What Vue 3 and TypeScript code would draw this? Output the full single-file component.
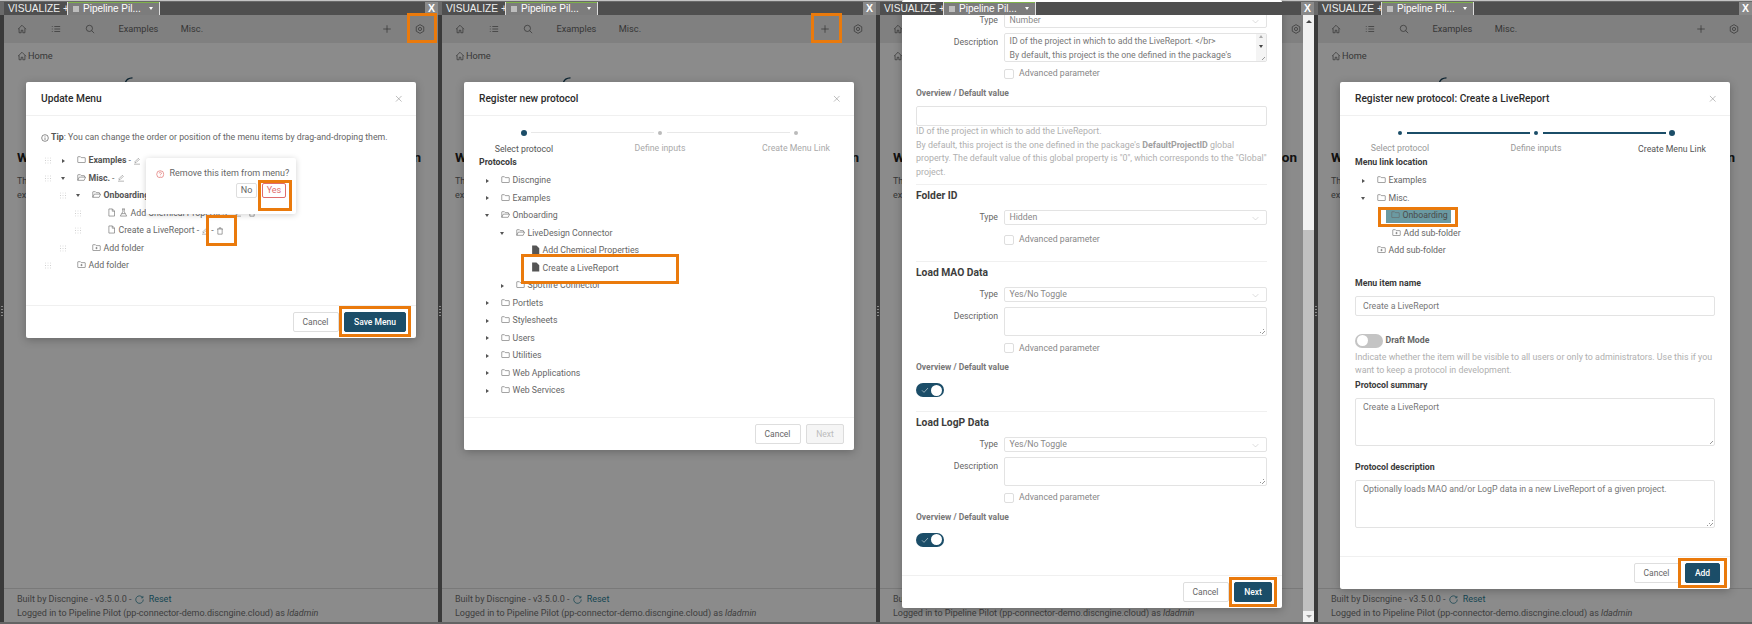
<script setup lang="ts">
interface Row {
  d: number
  arrow?: 'r' | 'd'
  icon: string
  label: string
  bold?: boolean
  flask?: boolean
  edit?: boolean
  del?: boolean
  on?: boolean
}
interface Mark { x: number; y: number; w: number; h: number }
interface Shot { id: string; marks: Mark[] }

const shots: Shot[] = [
  { id: 'menu', marks: [
    { x: 407, y: 13, w: 30, h: 30 }, { x: 258, y: 180, w: 34, h: 31 },
    { x: 206, y: 215, w: 31, h: 31 }, { x: 339, y: 306, w: 72, h: 31 } ] },
  { id: 'proto', marks: [
    { x: 373, y: 13, w: 31, h: 30 }, { x: 83, y: 254, w: 158, h: 30 } ] },
  { id: 'inputs', marks: [ { x: 353, y: 577, w: 48, h: 30 } ] },
  { id: 'link', marks: [
    { x: 64, y: 207, w: 80, h: 20 }, { x: 364, y: 558, w: 49, h: 30 } ] },
]

const menuRows: Row[] = [
  { d: 0, arrow: 'r', icon: 'folder', label: 'Examples', bold: true, edit: true },
  { d: 0, arrow: 'd', icon: 'open', label: 'Misc.', bold: true, edit: true },
  { d: 1, arrow: 'd', icon: 'open', label: 'Onboarding', bold: true, edit: true },
  { d: 2, icon: 'file', label: 'Add Chemical Properties', flask: true, edit: true, del: true },
  { d: 2, icon: 'file', label: 'Create a LiveReport', edit: true, del: true },
  { d: 1, icon: 'add', label: 'Add folder' },
  { d: 0, icon: 'add', label: 'Add folder' },
]
const protoRows: Row[] = [
  { d: 0, arrow: 'r', icon: 'folder', label: 'Discngine' },
  { d: 0, arrow: 'r', icon: 'folder', label: 'Examples' },
  { d: 0, arrow: 'd', icon: 'open', label: 'Onboarding' },
  { d: 1, arrow: 'd', icon: 'open', label: 'LiveDesign Connector' },
  { d: 2, icon: 'solid', label: 'Add Chemical Properties' },
  { d: 2, icon: 'solid', label: 'Create a LiveReport' },
  { d: 1, arrow: 'r', icon: 'folder', label: 'Spotfire Connector' },
  { d: 0, arrow: 'r', icon: 'folder', label: 'Portlets' },
  { d: 0, arrow: 'r', icon: 'folder', label: 'Stylesheets' },
  { d: 0, arrow: 'r', icon: 'folder', label: 'Users' },
  { d: 0, arrow: 'r', icon: 'folder', label: 'Utilities' },
  { d: 0, arrow: 'r', icon: 'folder', label: 'Web Applications' },
  { d: 0, arrow: 'r', icon: 'folder', label: 'Web Services' },
]
const linkRows: Row[] = [
  { d: 0, arrow: 'r', icon: 'folder', label: 'Examples' },
  { d: 0, arrow: 'd', icon: 'folder', label: 'Misc.' },
  { d: 1, icon: 'folder', label: 'Onboarding', on: true },
  { d: 1, icon: 'add', label: 'Add sub-folder' },
  { d: 0, icon: 'add', label: 'Add sub-folder' },
]
const steps = ['Select protocol', 'Define inputs', 'Create Menu Link']
const titles: Record<string, string> = {
  menu: 'Update Menu',
  proto: 'Register new protocol',
  link: 'Register new protocol: Create a LiveReport',
}
</script>

<template>
  <div class="board">
    <svg class="sprite" aria-hidden="true">
      <symbol id="i-home" viewBox="0 0 24 24"><path d="M2.5 12.5 12 3l9.5 9.5M5 10.5V21h5v-6h4v6h5V10.5"/></symbol>
      <symbol id="i-list" viewBox="0 0 24 24"><path d="M8 6h14M8 12h14M8 18h14M2 6h2M2 12h2M2 18h2"/></symbol>
      <symbol id="i-search" viewBox="0 0 24 24"><circle cx="10.5" cy="10.5" r="7.5"/><path d="m16 16 6 6"/></symbol>
      <symbol id="i-plus" viewBox="0 0 24 24"><path d="M12 3v18M3 12h18"/></symbol>
      <symbol id="i-gear" viewBox="0 0 24 24"><path d="M12 1.500 21 6.700v10.600L12 22.500 3 17.300V6.700Z"/><circle cx="12" cy="12" r="3.800"/></symbol>
      <symbol id="i-folder" viewBox="0 0 24 24"><path d="M2 5.500a1 1 0 0 1 1-1h6l2.500 2.500H21a1 1 0 0 1 1 1v11a1 1 0 0 1-1 1H3a1 1 0 0 1-1-1Z"/></symbol>
      <symbol id="i-open" viewBox="0 0 24 24"><path d="M2 19.500V5.500a1 1 0 0 1 1-1h6l2.500 2.500H19a1 1 0 0 1 1 1V11M2 19.500l4-8.500h17l-4 8.500Z"/></symbol>
      <symbol id="i-add" viewBox="0 0 24 24"><path d="M2 5.500a1 1 0 0 1 1-1h6l2.500 2.500H21a1 1 0 0 1 1 1v11a1 1 0 0 1-1 1H3a1 1 0 0 1-1-1ZM12 10.500v6M9 13.500h6"/></symbol>
      <symbol id="i-file" viewBox="0 0 24 24"><path d="M5 2.500h9.500L20 8v13.500H5ZM14 2.500V8.500h6"/></symbol>
      <symbol id="i-solid" viewBox="0 0 24 24"><path class="fill" d="M3 0h11.500L22 7.500V24H3Z"/></symbol>
      <symbol id="i-edit" viewBox="0 0 24 24"><path d="M6 17v-3L16 4l3 3L9 17ZM3 21.500h18"/></symbol>
      <symbol id="i-del" viewBox="0 0 24 24"><path d="M3 6h18M9 6V2.500h6V6M5.500 6v15.500h13V6"/></symbol>
      <symbol id="i-flask" viewBox="0 0 24 24"><path d="M8 2.500h8M10 2.500V10L3.500 21.500h17L14 10V2.500M7 15h10"/></symbol>
      <symbol id="i-help" viewBox="0 0 24 24"><circle cx="12" cy="12" r="10"/><path d="M8.800 9.500a3.200 3.200 0 1 1 4.800 2.800c-1 .6-1.600 1.200-1.600 2.400M12 17v1.500"/></symbol>
      <symbol id="i-info" viewBox="0 0 24 24"><circle cx="12" cy="12" r="10"/><path d="M12 10.500V18M12 6v2"/></symbol>
      <symbol id="i-close" viewBox="0 0 24 24"><path d="m3 3 18 18M21 3 3 21"/></symbol>
      <symbol id="i-chev" viewBox="0 0 24 24"><path d="m2 7 10 10L22 7"/></symbol>
      <symbol id="i-check" viewBox="0 0 24 24"><path d="m3 13 6 6L21 6"/></symbol>
      <symbol id="i-reload" viewBox="0 0 24 24"><path d="M20.500 7A10 10 0 1 0 22 12M21 2.500V7.500h-5"/></symbol>
    </svg>

    <section v-for="s in shots" :key="s.id" class="shot">
      <header class="tabs">
        <span class="brand">VISUALIZE +</span>
        <span class="tab">
          <i class="sheet"></i>
          <span class="tab-name">Pipeline Pil...</span>
          <i class="tab-caret"></i>
        </span>
        <span class="tab-x">X</span>
      </header>

      <div class="app">
        <nav class="nav">
          <svg class="ico nav-ico"><use href="#i-home" /></svg>
          <svg class="ico nav-ico list"><use href="#i-list" /></svg>
          <svg class="ico nav-ico find"><use href="#i-search" /></svg>
          <span class="nav-link first">Examples</span>
          <span class="nav-link">Misc.</span>
          <svg class="ico nav-ico add"><use href="#i-plus" /></svg>
          <svg class="ico nav-ico gear"><use href="#i-gear" /></svg>
        </nav>
        <main class="page">
          <div class="crumb"><svg class="ico crumb-ico"><use href="#i-home" /></svg>Home</div>
          <svg class="logo" viewBox="0 0 8 6"><path d="M.5 5.500C1 3 3.500 1 7.500.8"/></svg>
          <h1 class="hello">Welcome to the Pipeline Pilot Connector Web Application</h1>
          <p class="intro">This application gives access to the protocols registered in the menu, and provides<br />examples of what can be done.</p>
        </main>
        <footer class="foot">
          <div>Built by Discngine - v3.5.0.0 - <svg class="ico spin"><use href="#i-reload" /></svg><span class="reset">Reset</span></div>
          <div>Logged in to Pipeline Pilot (pp-connector-demo.discngine.cloud) as <em>ldadmin</em></div>
        </footer>
      </div>
      <div class="scrim"></div>

      <!-- Update Menu -->
      <div v-if="s.id === 'menu'" class="modal m-menu">
        <div class="m-head">{{ titles.menu }}<svg class="ico m-close"><use href="#i-close" /></svg></div>
        <div class="m-body">
          <div class="tip"><svg class="ico tip-ico"><use href="#i-info" /></svg><b>Tip</b>: You can change the order or position of the menu items by drag-and-droping them.</div>
          <div class="tree">
            <div v-for="r in menuRows" :key="r.label + r.d" class="row">
              <i class="indent" :style="{ width: r.d * 15 + 'px' }"></i>
              <i class="dots"></i>
              <i class="arrow-slot"><i v-if="r.arrow" :class="'arrow-' + r.arrow"></i></i>
              <svg class="ico row-ico"><use :href="'#i-' + r.icon" /></svg>
              <svg v-if="r.flask" class="ico row-ico flask"><use href="#i-flask" /></svg>
              <span class="row-label" :class="{ strong: r.bold }">{{ r.label }}</span>
              <template v-if="r.edit">
                <span class="sep">-</span><svg class="ico act under"><use href="#i-edit" /></svg>
              </template>
              <template v-if="r.del">
                <span class="sep">-</span><svg class="ico act"><use href="#i-del" /></svg>
              </template>
            </div>
          </div>
        </div>
        <div class="m-foot">
          <button class="btn">Cancel</button>
          <button class="btn primary save">Save Menu</button>
        </div>
        <div class="pop">
          <div class="pop-q"><svg class="ico pop-ico"><use href="#i-help" /></svg>Remove this item from menu?</div>
          <div class="pop-a"><button class="btn mini">No</button><button class="btn mini danger">Yes</button></div>
        </div>
      </div>

      <!-- Select protocol -->
      <div v-else-if="s.id === 'proto'" class="modal m-proto">
        <div class="m-head">{{ titles.proto }}<svg class="ico m-close"><use href="#i-close" /></svg></div>
        <div class="m-body">
          <div class="steps">
            <div v-for="(t, i) in steps" :key="t" class="step" :class="{ current: i === 0 }">
              <i class="dot"></i><i v-if="i < 2" class="link-line"></i><span>{{ t }}</span>
            </div>
          </div>
          <div class="lbl">Protocols</div>
          <div class="tree tree-p">
            <div v-for="r in protoRows" :key="r.label + r.d" class="row">
              <i class="indent" :style="{ width: r.d * 15 + 'px' }"></i>
              <i class="arrow-slot"><i v-if="r.arrow" :class="'arrow-' + r.arrow"></i></i>
              <svg class="ico row-ico" :class="{ solid: r.icon === 'solid' }"><use :href="'#i-' + r.icon" /></svg>
              <span class="row-label">{{ r.label }}</span>
            </div>
          </div>
        </div>
        <div class="m-foot">
          <button class="btn">Cancel</button>
          <button class="btn off">Next</button>
        </div>
      </div>

      <!-- Define inputs -->
      <div v-else-if="s.id === 'inputs'" class="modal m-inputs">
        <div class="form">
          <div class="frow"><label>Type</label><div class="sel">Number<svg class="ico chev"><use href="#i-chev" /></svg></div></div>
          <div class="frow gap5"><label>Description</label>
            <div class="area scrolled">ID of the project in which to add the LiveReport. &lt;/br&gt;<br />By default, this project is the one defined in the package's
              <i class="area-bar"><i class="up"></i><i class="down"></i></i><i class="grip"></i>
            </div>
          </div>
          <div class="frow adv"><label></label><span class="chk-line"><i class="chk"></i>Advanced parameter</span></div>
          <div class="ov">Overview / Default value</div>
          <div class="inp"></div>
          <p class="help lines">ID of the project in which to add the LiveReport.<br />By default, this project is the one defined in the package's <b>DefaultProjectID</b> global<br />property. The default value of this global property is "0", which corresponds to the "Global"<br />project.</p>

          <hr class="rule r1" />
          <div class="sec">Folder ID</div>
          <div class="frow"><label>Type</label><div class="sel">Hidden<svg class="ico chev"><use href="#i-chev" /></svg></div></div>
          <div class="frow adv a2"><label></label><span class="chk-line"><i class="chk"></i>Advanced parameter</span></div>

          <hr class="rule r2" />
          <div class="sec">Load MAO Data</div>
          <div class="frow"><label>Type</label><div class="sel">Yes/No Toggle<svg class="ico chev"><use href="#i-chev" /></svg></div></div>
          <div class="frow gap5"><label>Description</label><div class="area"><i class="grip"></i></div></div>
          <div class="frow adv"><label></label><span class="chk-line"><i class="chk"></i>Advanced parameter</span></div>
          <div class="ov">Overview / Default value</div>
          <div class="toggle on"><svg class="ico tick"><use href="#i-check" /></svg><i class="knob"></i></div>

          <hr class="rule r2 r3" />
          <div class="sec">Load LogP Data</div>
          <div class="frow"><label>Type</label><div class="sel">Yes/No Toggle<svg class="ico chev"><use href="#i-chev" /></svg></div></div>
          <div class="frow gap5"><label>Description</label><div class="area"><i class="grip"></i></div></div>
          <div class="frow adv"><label></label><span class="chk-line"><i class="chk"></i>Advanced parameter</span></div>
          <div class="ov">Overview / Default value</div>
          <div class="toggle on"><svg class="ico tick"><use href="#i-check" /></svg><i class="knob"></i></div>
        </div>
        <div class="m-foot">
          <button class="btn">Cancel</button>
          <button class="btn primary">Next</button>
        </div>
      </div>

      <!-- Create menu link -->
      <div v-else class="modal m-link">
        <div class="m-head">{{ titles.link }}<svg class="ico m-close"><use href="#i-close" /></svg></div>
        <div class="m-body">
          <div class="steps done">
            <div v-for="(t, i) in steps" :key="t" class="step" :class="{ current: i === 2 }">
              <i class="dot"></i><i v-if="i < 2" class="link-line"></i><span>{{ t }}</span>
            </div>
          </div>
          <div class="lbl">Menu link location</div>
          <div class="tree tree-p">
            <div v-for="r in linkRows" :key="r.label + r.d" class="row">
              <i class="indent" :style="{ width: r.d * 15 + 'px' }"></i>
              <i class="arrow-slot"><i v-if="r.arrow" :class="'arrow-' + r.arrow"></i></i>
              <span class="pick" :class="{ picked: r.on }">
                <svg class="ico row-ico"><use :href="'#i-' + r.icon" /></svg>
                <span class="row-label">{{ r.label }}</span>
              </span>
            </div>
          </div>
          <div class="lbl name-lbl">Menu item name</div>
          <div class="inp val">Create a LiveReport</div>
          <div class="draft"><div class="toggle"><i class="knob"></i></div><span>Draft Mode</span></div>
          <p class="help h-draft">Indicate whether the item will be visible to all users or only to administrators. Use this if you want to keep a protocol in development.</p>
          <div class="lbl sum-lbl">Protocol summary</div>
          <div class="area big">Create a LiveReport<i class="grip"></i></div>
          <div class="lbl desc-lbl">Protocol description</div>
          <div class="area big">Optionally loads MAO and/or LogP data in a new LiveReport of a given project.<i class="grip"></i></div>
        </div>
        <div class="m-foot">
          <button class="btn">Cancel</button>
          <button class="btn primary add-btn">Add</button>
        </div>
      </div>

      <div v-if="s.id === 'inputs'" class="vbar">
        <i class="v-up"></i><i class="v-thumb"></i><i class="v-down"></i>
      </div>

      <i class="handle"></i>
      <i v-for="(m, i) in s.marks" :key="i" class="mark"
         :style="{ left: m.x + 'px', top: m.y + 'px', width: m.w + 'px', height: m.h + 'px' }"></i>
    </section>
  </div>
</template>

<style>
html, body { margin: 0; background: #fff; }
</style>

<style scoped>
.board {
  display: grid;
  grid-template-columns: repeat(4, 438px);
  width: 1752px;
  height: 624px;
  overflow: hidden;
  font: 9px/1.5 Roboto, "Liberation Sans", sans-serif;
  color: #666;
}
.sprite { position: absolute; width: 0; height: 0; }
.ico { fill: none; stroke: currentColor; stroke-width: 1.6; display: inline-block; flex: none; }
.fill { fill: currentColor; stroke: none; }
i { font-style: normal; display: block; }
button { font: inherit; padding: 0; cursor: default; }

.shot {
  position: relative;
  padding-left: 4px;
  height: 624px;
  box-sizing: border-box;
  background: linear-gradient(#c4c4c4 1px, #6a6a6a 1px);
  display: flex;
  flex-direction: column;
  overflow: hidden;
  border-bottom: 2px solid #646464;
}

/* window tabs */
.tabs {
  position: relative;
  z-index: 3;
  margin-top: 2px;
  height: 13px;
  flex: none;
  display: flex;
  align-items: stretch;
  background: #4f4f4f;
  color: #fff;
  font: 10px/13px "Liberation Sans", Arial, sans-serif;
  padding-left: 4px;
}
.brand { width: 59px; font-size: 10.200px; white-space: nowrap; color: #eee; }
.tab {
  box-sizing: border-box;
  width: 93px;
  display: flex;
  align-items: center;
  background: #7c7c7c;
  border: solid #ddd;
  border-width: 0 1px;
  box-shadow: inset 0 1px 0 #7fb24a;
  padding-left: 5px;
}
.sheet { width: 6px; height: 6px; background: #bdbdbd; margin-right: 4px; }
.tab-name { width: 66px; white-space: nowrap; }
.tab-caret { border: 2.500px solid transparent; border-top: 3px solid #fff; border-bottom: 0; }
.tab-x { margin-left: auto; width: 13px; text-align: center; background: #8a8a8a; font-weight: 700; font-size: 10.500px; }

/* dimmed application */
.app {
  flex: 1;
  display: flex;
  flex-direction: column;
  min-height: 0;
  background: #fdfdfd;
}
.nav {
  height: 28px;
  flex: none;
  display: flex;
  align-items: center;
  background: #e9e9e9;
  padding-left: 12.500px;
  color: #555;
}
.nav-ico { width: 10px; height: 10px; }
.nav-ico.list { margin-left: 24px; }
.nav-ico.find { margin-left: 24px; }
.nav-link { font-size: 9.200px; color: #666; }
.nav-link.first { margin-left: 24px; margin-right: 22.500px; }
.nav-ico.add { margin-left: auto; margin-right: 23.500px; }
.nav-ico.gear { margin-right: 13px; }

.page { flex: 1; min-height: 0; padding: 6px 0 0 13px; }
.crumb { display: flex; align-items: center; height: 14px; font-size: 9.200px; color: #666; }
.crumb-ico { width: 10px; height: 10px; margin-right: 1px; color: #555; }
.logo { display: block; width: 8px; height: 6px; margin: 14px 0 0 108px; fill: none; stroke: #123f58; stroke-width: 1.300; }
.hello { margin: 65px 0 0; width: 404px; font-size: 13.500px; line-height: 18px; font-weight: 700; color: #222; text-align: justify; text-align-last: justify; }
.intro { margin: 8px 0 0; width: 380px; line-height: 14px; color: #666; }
.foot {
  height: 34px;
  flex: none;
  box-sizing: border-box;
  padding: 3px 0 0 13px;
  border-top: 1px solid #dcdcdc;
  line-height: 14.300px;
  color: #727272;
}
.spin { width: 9px; height: 9px; margin: 0 5px 0 1px; vertical-align: -1.500px; color: #2a7f96; stroke-width: 2; }
.reset { color: #2a7f96; }
.foot em { font-style: italic; }

.scrim { position: absolute; z-index: 1; left: 0; right: 0; top: 15px; bottom: 0; background: rgba(0, 0, 0, .45); }
.handle { position: absolute; z-index: 2; left: 1px; top: 306px; width: 2px; height: 10px; background: repeating-linear-gradient(#8a8a8a 0 1px, transparent 1px 3px); }

/* dialogs */
.modal {
  position: absolute;
  z-index: 2;
  left: 26px;
  width: 390px;
  top: 82px;
  display: flex;
  flex-direction: column;
  background: #fff;
  border-radius: 2px;
  box-shadow: 0 2px 8px rgba(0, 0, 0, .25);
  font-size: 8.750px;
}
.m-menu { height: 256px; }
.m-proto { height: 368px; }
.m-link { height: 507px; }
.m-inputs { top: 0; width: 380px; height: 608px; overflow: hidden; }

.m-head {
  flex: none;
  height: 34px;
  box-sizing: border-box;
  padding-left: 15px;
  display: flex;
  align-items: center;
  border-bottom: 1px solid #f0f0f0;
  font-size: 10.200px;
  font-weight: 500;
  color: #2b2b2b;
}
.m-close { width: 7.500px; height: 7.500px; margin-left: auto; margin-right: 13.500px; color: #8c8c8c; stroke-width: 1.800; }
.m-body { flex: 1; min-height: 0; padding: 0 15px; }
.m-foot {
  flex: none;
  margin-top: auto;
  height: 33px;
  box-sizing: border-box;
  border-top: 1px solid #f0f0f0;
  display: flex;
  align-items: center;
  justify-content: flex-end;
  gap: 5.500px;
  padding-right: 10px;
}
.btn {
  box-sizing: border-box;
  height: 20px;
  width: 46px;
  border: 1px solid #dedede;
  border-radius: 2px;
  background: #fff;
  color: #666;
  font-size: 8.500px;
}
.btn.primary { background: #1b4d68; border-color: #1b4d68; color: #fff; font-weight: 500; width: 38px; }
.btn.save { width: 62px; }
.btn.add-btn { width: 35px; }
.btn.off { width: 38px; background: #f5f5f5; color: #bcbcbc; border-color: #dcdcdc; }

.tip { margin-top: 14px; height: 15px; display: flex; align-items: center; white-space: pre-wrap; color: #666; }
.tip b { font-weight: 700; color: #555; }
.tip-ico { width: 8px; height: 8px; margin: 0 2px 0 0; color: #555; stroke-width: 2; }

.tree { margin-top: 7px; }
.row { height: 17.500px; display: flex; align-items: center; white-space: nowrap; color: #666; }
.indent { flex: none; }
.dots {
  flex: none;
  width: 14px;
  height: 7px;
  background: radial-gradient(circle, #cfcfcf .7px, transparent .8px) center / 2.500px 2.500px;
  clip-path: inset(0 4px);
}
.arrow-slot { flex: none; width: 16px; display: flex; justify-content: center; }
.arrow-r { border: 2px solid transparent; border-left: 3px solid #555; border-right: 0; }
.arrow-d { border: 2px solid transparent; border-top: 3px solid #555; border-bottom: 0; }
.row-ico { width: 9px; height: 9px; margin: -2px 1px 0 5.500px; color: #666; }
.row-ico.solid { height: 10px; color: #555; }
.flask { margin-left: 2px; }
.row-label { margin-left: 2px; }
.strong { font-weight: 700; color: #555; }
.sep { margin: 0 2px; }
.act { width: 8px; height: 8px; color: #555; }
.under { color: #777; }

.pop {
  position: absolute;
  left: 120px;
  top: 76px;
  width: 150px;
  height: 56px;
  box-sizing: border-box;
  background: #fff;
  border-radius: 2px;
  box-shadow: 0 1px 6px rgba(0, 0, 0, .18);
  padding: 9px 10px 0 10px;
  font-size: 9px;
}
.pop-q { display: flex; align-items: center; height: 14px; white-space: nowrap; color: #666; }
.pop-ico { width: 8.500px; height: 8.500px; margin-right: 5px; color: #d9534f; }
.pop-a { margin-top: 2px; display: flex; justify-content: flex-end; gap: 5px; }
.btn.mini { width: 21px; height: 15px; font-size: 9px; line-height: 13px; }
.btn.danger { width: 24px; border-color: #e06c6c; color: #e06c6c; }

/* stepper */
.steps { display: grid; grid-template-columns: repeat(3, 136px); margin: 14px 0 0 -23px; width: 408px; }
.step { position: relative; display: flex; flex-direction: column; align-items: center; color: #aaa; }
.step span { margin-top: 4.500px; line-height: 14px; white-space: nowrap; }
.dot { width: 4.500px; height: 4.500px; margin: .8px 0; border-radius: 50%; background: #bbb; }
.link-line { position: absolute; top: 2.200px; left: calc(50% + 7px); width: 123px; height: 1px; background: #e8e8e8; }
.step.current { color: #555; }
.step.current .dot { width: 6px; height: 6px; margin: 0; background: #1b4d68; }
.step.current span { margin-top: 5.500px; }
.done .dot { background: #1b4d68; }
.done .link-line { background: #1b4d68; height: 1.400px; }
.done .step:not(.current) { color: #999; }
.lbl { font-weight: 700; color: #3a3a3a; line-height: 14px; }
.m-proto .lbl, .m-link .lbl { margin-top: -1px; }
.tree-p { margin-top: 3.500px; }

/* link dialog */
.pick { display: flex; align-items: center; box-sizing: border-box; height: 14px; }
.picked { background: #6b9aa2; padding-right: 3px; color: #444; }
.picked .row-ico { margin-left: 4.500px; }
.picked .row-label { color: #4a4a4a; }
.name-lbl { margin-top: 16px !important; }
.inp {
  box-sizing: border-box;
  height: 20px;
  margin-top: 6px;
  border: 1px solid #e3e3e3;
  border-radius: 2px;
}
.inp.val { width: 360px; padding-left: 7px; line-height: 18px; color: #777; }
.draft { margin-top: 18px; display: flex; align-items: center; gap: 3px; font-weight: 700; color: #666; }
.help { margin: 0; line-height: 13.700px; color: #b0b0b0; font-size: 8.850px; }
.help b { color: #a0a0a0; font-weight: 700; }
.help.lines { white-space: nowrap; }
.h-draft { margin-top: 3px; width: 360px; }
.sum-lbl { margin-top: 0 !important; }
.desc-lbl { margin-top: 14px !important; }
.area {
  position: relative;
  box-sizing: border-box;
  border: 1px solid #e3e3e3;
  border-radius: 2px;
  flex: 1;
  height: 29px;
  padding: 1px 7px;
  line-height: 13.700px;
  color: #777;
}
.area.big { width: 360px; height: 48px; margin-top: 6px; padding-top: 2px; }
.grip {
  position: absolute; right: 1px; bottom: 1px; width: 6px; height: 6px;
  background: linear-gradient(135deg, transparent 50%, #999 50% 58%, transparent 58% 72%, #999 72% 80%, transparent 80%);
}

/* inputs dialog */
.form { flex: 1; min-height: 0; padding: 13px 15px 0 14px; }
.frow { display: grid; grid-template-columns: 82px 263px; column-gap: 6px; align-items: center; }
.frow label { text-align: right; color: #666; }
.gap5 { margin-top: 5px; align-items: start; }
.gap5 label { line-height: 19px; }
.sel {
  position: relative;
  box-sizing: border-box;
  height: 15px;
  padding-left: 4.500px;
  border: 1px solid #e3e3e3;
  border-radius: 2px;
  line-height: 13px;
  color: #888;
}
.chev { position: absolute; right: 7px; top: 4px; width: 7px; height: 7px; color: #aaa; stroke-width: 1.400; }
.scrolled { overflow: hidden; white-space: nowrap; padding-left: 4.500px; }
.area-bar { position: absolute; right: 0; top: 0; bottom: 0; width: 10px; background: #f4f4f4; }
.up, .down { position: absolute; left: 2.500px; border: 2.500px solid transparent; }
.up { top: 1px; border-bottom: 3px solid #aaa; border-top: 0; }
.down { top: 11px; border-top: 3px solid #444; border-bottom: 0; }
.frow.adv { height: 14px; margin-top: 5px; }
.frow.a2 { margin-top: 7.500px; }
.chk-line { display: flex; align-items: center; color: #888; }
.chk { box-sizing: border-box; width: 10px; height: 10px; margin-right: 5px; border: 1px solid #dedede; border-radius: 2px; }
.ov { margin-top: 5px; height: 14px; line-height: 14px; font-size: 8.500px; font-weight: 700; color: #777; }
.form .inp { margin-top: 6px; width: 351px; }
.form .help { margin-top: -1px; width: 351px; }
.rule { border: 0; border-top: 1px solid #f0f0f0; margin: 0; width: 351px; }
.r1 { margin-top: 4px; }
.r2 { margin-top: 14px; }
.r3 + .sec { margin-top: 3.500px; }
.sec { margin: 4.500px 0 7px; height: 14px; line-height: 14px; font-size: 10.300px; font-weight: 700; color: #3d3d3d; }
.toggle {
  position: relative;
  width: 27.500px;
  height: 14px;
  flex: none;
  border-radius: 7px;
  background: #c4c4c4;
}
.toggle.on { background: #1b4d68; margin-top: 9px; }
.knob { position: absolute; left: 1.500px; top: 1.500px; width: 11px; height: 11px; border-radius: 50%; background: #fff; }
.on .knob { left: 15px; }
.tick { position: absolute; left: 4.500px; top: 3px; width: 8px; height: 8px; color: #fff; }

.vbar {
  position: absolute;
  z-index: 2;
  left: 427px;
  top: 15px;
  bottom: 0;
  width: 11px;
  background: #f1f1f1;
  display: flex;
  flex-direction: column;
  align-items: center;
}
.v-up { margin-top: 5px; border: 3px solid transparent; border-bottom: 3px solid #444; border-top: 0; }
.v-thumb { margin-top: 207px; width: 100%; flex: 1; background: #c1c1c1; }
.v-down { margin: 4px 0; border: 3px solid transparent; border-top: 3px solid #999; border-bottom: 0; }

.mark { position: absolute; z-index: 4; box-sizing: border-box; border: 3px solid #ea7a0c; }
</style>
